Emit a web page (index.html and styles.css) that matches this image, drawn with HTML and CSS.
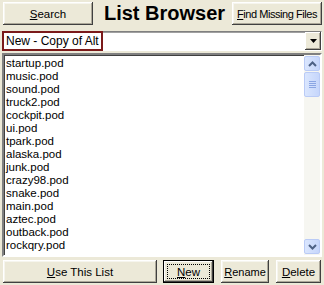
FILE: index.html
```html
<!DOCTYPE html>
<html lang="en">
<head>
    <meta charset="UTF-8">
    <title>List Browser</title>
    <link rel="stylesheet" href="styles.css">
</head>
<body>
    <div class="window">
        <div class="top">
            <button class="btn search"><u>S</u>earch</button>
            <h1 class="title">List Browser</h1>
            <button class="btn find"><u>F</u>ind Missing Files</button>
        </div>

        <div class="combo">
            <span class="combo-text">New - Copy of Alt</span>
            <span class="combo-arrow">
                <svg width="7" height="4" viewBox="0 0 7 4"><path d="M0 0h7L3.5 4z" fill="#000"/></svg>
            </span>
        </div>

        <div class="listbox">
            <ul class="items">
                <li>startup.pod</li>
                <li>music.pod</li>
                <li>sound.pod</li>
                <li>truck2.pod</li>
                <li>cockpit.pod</li>
                <li>ui.pod</li>
                <li>tpark.pod</li>
                <li>alaska.pod</li>
                <li>junk.pod</li>
                <li>crazy98.pod</li>
                <li>snake.pod</li>
                <li>main.pod</li>
                <li>aztec.pod</li>
                <li>outback.pod</li>
                <li>rockqry.pod</li>
            </ul>
            <div class="scrollbar">
                <div class="sb-btn">
                    <svg width="9" height="6" viewBox="0 0 9 6"><path d="M1 5L4.5 1.5L8 5" fill="none" stroke="#4d6185" stroke-width="2"/></svg>
                </div>
                <div class="sb-thumb">
                    <svg width="7" height="8" viewBox="0 0 7 8"><path d="M0 .5h7M0 2.5h7M0 4.5h7M0 6.5h7" stroke="#8aa5e3" stroke-width="1"/></svg>
                </div>
                <div class="sb-track"></div>
                <div class="sb-btn">
                    <svg width="9" height="6" viewBox="0 0 9 6"><path d="M1 1L4.5 4.5L8 1" fill="none" stroke="#4d6185" stroke-width="2"/></svg>
                </div>
            </div>
        </div>

        <div class="bottom">
            <button class="btn use"><u>U</u>se This List</button>
            <button class="btn new default"><span class="focus"><u>N</u>ew</span></button>
            <button class="btn rename"><u>R</u>ename</button>
            <button class="btn delete"><u>D</u>elete</button>
        </div>
    </div>
</body>
</html>
```

FILE: styles.css
```css
body {
    margin: 0;
    background: #ece9d8;
    font-family: 'Liberation Sans', Arial, sans-serif;
    font-size: 11px;
    color: #000;
}
.window {
    width: 324px;
    height: 285px;
    padding: 2px 2px 0 2px;
    box-sizing: border-box;
}
u {
    text-decoration: underline;
    text-underline-offset: 1px;
}

/* buttons */
.btn {
    background: #ece9d8;
    border: none;
    padding: 0;
    font-family: inherit;
    font-size: 11.5px;
    color: #000;
    height: 23px;
    white-space: nowrap;
    box-shadow: inset -1px -1px #404040, inset 1px 1px #fff, inset -2px -2px #aca899, inset 2px 2px #f6f5ee;
}
.btn.default {
    box-shadow: inset 0 0 0 1px #000, inset -2px -2px #404040, inset 2px 2px #fff, inset -3px -3px #aca899;
}
.focus {
    display: flex;
    align-items: center;
    justify-content: center;
    margin: 4px;
    height: 13px;
    border: 1px dotted #000;
}

.top {
    display: flex;
    align-items: flex-start;
    height: 27px;
}
.search {
    width: 90px;
    margin-left: 1px;
}
.title {
    flex: 1;
    margin: 0;
    text-align: center;
    font-size: 20px;
    font-weight: bold;
    line-height: 22px;
    padding-left: 4px;
}
.find {
    width: 90px;
    font-size: 11px;
    letter-spacing: -0.45px;
}

/* combo */
.combo {
    display: flex;
    height: 20px;
    margin-top: 2px;
    background: #fff;
    box-shadow: inset 1px 1px #a0a0a0, inset -1px -1px #fff;
    border: 1px solid #808080;
    border-right-color: #fff;
    border-bottom-color: #fff;
    box-sizing: border-box;
}
.combo-text {
    border: 2px solid #7b1a1a;
    padding: 0 2px;
    line-height: 16px;
    height: 20px;
    box-sizing: border-box;
    margin: -1px 0 -1px -1px;
    font-size: 12px;
}
.combo-arrow {
    margin-left: auto;
    width: 16px;
    display: flex;
    align-items: center;
    justify-content: center;
    background: #ece9d8;
    box-shadow: inset -1px -1px #404040, inset 1px 1px #fff, inset -2px -2px #aca899;
}

/* list */
.listbox {
    display: flex;
    height: 204px;
    margin-top: 2px;
    background: #fff;
    border: 2px solid;
    border-color: #808080 #fff #fff #808080;
    box-shadow: inset 1px 1px #404040;
    box-sizing: border-box;
}
.items {
    flex: 1;
    list-style: none;
    margin: 0;
    padding: 2px 0 0 2px;
    overflow: hidden;
    font-size: 11.5px;
}
.items li {
    height: 13px;
    line-height: 13px;
}
.scrollbar {
    width: 16px;
    display: flex;
    flex-direction: column;
    background: #f6f6f1;
    padding-top: 1px;
}
.sb-btn, .sb-thumb {
    height: 15px;
    border: 1px solid #bacbf6;
    border-radius: 2px;
    background: linear-gradient(90deg, #dae6fe, #c6d6fb);
    box-sizing: border-box;
    display: flex;
    align-items: center;
    justify-content: center;
}
.sb-thumb {
    height: 25px;
    margin-top: 1px;
}
.sb-track {
    flex: 1;
}
.sb-btn:last-child {
    margin-bottom: 1px;
}

/* bottom row */
.bottom {
    display: flex;
    margin-top: 3px;
    margin-left: 1px;
}
.use {
    width: 154px;
}
.new {
    width: 51px;
    margin-left: 6px;
}
.rename {
    width: 48px;
    margin-left: 7px;
    font-size: 11px;
}
.delete {
    width: 45px;
    margin-left: 7px;
}
```
